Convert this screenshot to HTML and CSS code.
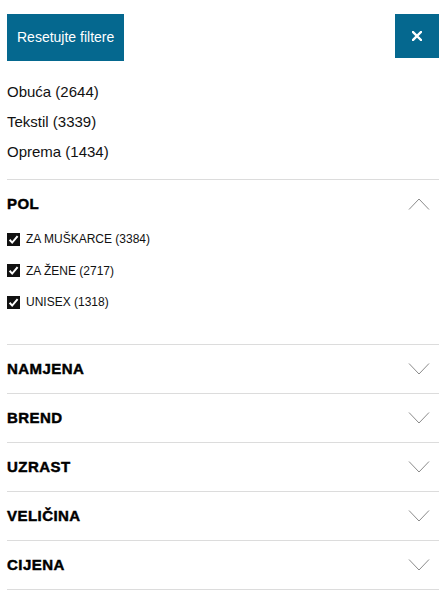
FILE: index.html
```html
<!DOCTYPE html>
<html lang="sr">
<head>
<meta charset="utf-8">
<title>Filteri</title>
<link rel="stylesheet" href="styles.css">
</head>
<body>
<div class="filters">
  <div class="top-row">
    <button class="btn-reset">Resetujte filtere</button>
    <button class="btn-close" aria-label="Zatvori">
      <svg width="10" height="10" viewBox="0 0 10 10"><path d="M1 1 L9 9 M9 1 L1 9" stroke="#fff" stroke-width="2.4" stroke-linecap="square" fill="none"/></svg>
    </button>
  </div>
  <ul class="categories">
    <li>Obuća (2644)</li>
    <li>Tekstil (3339)</li>
    <li>Oprema (1434)</li>
  </ul>

  <section class="group open">
    <div class="group-head">
      <span class="group-title">POL</span>
      <svg class="chev" width="22" height="12" viewBox="0 0 22 12"><path d="M1 11.5 L11 1 L21 11.5" stroke="#8a8a8a" stroke-width="1" fill="none"/></svg>
    </div>
    <ul class="checks">
      <li><span class="cb"><svg width="13" height="13" viewBox="0 0 13 13"><rect width="13" height="13" fill="#111"/><path d="M2.6 6.8 L5.2 9.6 L10.6 3.2" stroke="#fff" stroke-width="2" fill="none"/></svg></span>ZA MUŠKARCE (3384)</li>
      <li><span class="cb"><svg width="13" height="13" viewBox="0 0 13 13"><rect width="13" height="13" fill="#111"/><path d="M2.6 6.8 L5.2 9.6 L10.6 3.2" stroke="#fff" stroke-width="2" fill="none"/></svg></span>ZA ŽENE (2717)</li>
      <li><span class="cb"><svg width="13" height="13" viewBox="0 0 13 13"><rect width="13" height="13" fill="#111"/><path d="M2.6 6.8 L5.2 9.6 L10.6 3.2" stroke="#fff" stroke-width="2" fill="none"/></svg></span>UNISEX (1318)</li>
    </ul>
  </section>

  <section class="group">
    <div class="group-head">
      <span class="group-title">NAMJENA</span>
      <svg class="chev" width="22" height="12" viewBox="0 0 22 12"><path d="M1 0.5 L11 11 L21 0.5" stroke="#8a8a8a" stroke-width="1" fill="none"/></svg>
    </div>
  </section>
  <section class="group">
    <div class="group-head">
      <span class="group-title">BREND</span>
      <svg class="chev" width="22" height="12" viewBox="0 0 22 12"><path d="M1 0.5 L11 11 L21 0.5" stroke="#8a8a8a" stroke-width="1" fill="none"/></svg>
    </div>
  </section>
  <section class="group">
    <div class="group-head">
      <span class="group-title">UZRAST</span>
      <svg class="chev" width="22" height="12" viewBox="0 0 22 12"><path d="M1 0.5 L11 11 L21 0.5" stroke="#8a8a8a" stroke-width="1" fill="none"/></svg>
    </div>
  </section>
  <section class="group">
    <div class="group-head">
      <span class="group-title">VELIČINA</span>
      <svg class="chev" width="22" height="12" viewBox="0 0 22 12"><path d="M1 0.5 L11 11 L21 0.5" stroke="#8a8a8a" stroke-width="1" fill="none"/></svg>
    </div>
  </section>
  <section class="group last">
    <div class="group-head">
      <span class="group-title">CIJENA</span>
      <svg class="chev" width="22" height="12" viewBox="0 0 22 12"><path d="M1 0.5 L11 11 L21 0.5" stroke="#8a8a8a" stroke-width="1" fill="none"/></svg>
    </div>
  </section>
</div>
</body>
</html>
```

FILE: styles.css
```css
html, body {
  margin: 0;
  padding: 0;
  background: #fff;
}
body {
  font-family: "Liberation Sans", Arial, sans-serif;
  color: #111;
}
.filters {
  padding: 14px 8px 0 7px;
}
.top-row {
  display: flex;
  justify-content: space-between;
  align-items: flex-start;
}
.btn-reset {
  height: 47px;
  padding: 0 10px;
  border: 0;
  background: #05688f;
  color: #fff;
  font-family: "Liberation Sans", Arial, sans-serif;
  font-size: 14px;
  line-height: 47px;
  cursor: pointer;
}
.btn-close {
  width: 44px;
  height: 44px;
  border: 0;
  padding: 0;
  background: #05688f;
  display: flex;
  align-items: center;
  justify-content: center;
  cursor: pointer;
}
.btn-close svg {
  display: block;
}
.categories {
  list-style: none;
  margin: 16px 0 12px;
  padding: 0;
  font-size: 15px;
  line-height: 30px;
}
.group {
  border-top: 1px solid #dcdcdc;
}
.group.last {
  border-bottom: 1px solid #dcdcdc;
}
.group-head {
  height: 48px;
  display: flex;
  align-items: center;
  justify-content: space-between;
  padding-right: 9px;
}
.group-title {
  font-size: 15px;
  font-weight: 700;
  letter-spacing: 0.45px;
  -webkit-text-stroke: 0.45px #000;
  color: #000;
  margin-top: -2px;
}
.chev {
  display: block;
}
.checks {
  list-style: none;
  margin: 0;
  padding: 0 0 31px;
  display: flex;
  flex-direction: column;
  gap: 9.5px;
}
.checks li {
  height: 22px;
  display: flex;
  align-items: center;
  font-size: 12px;
  color: #111;
}
.cb {
  width: 13px;
  height: 13px;
  margin-right: 6px;
  display: block;
}
.cb svg {
  display: block;
}
```
